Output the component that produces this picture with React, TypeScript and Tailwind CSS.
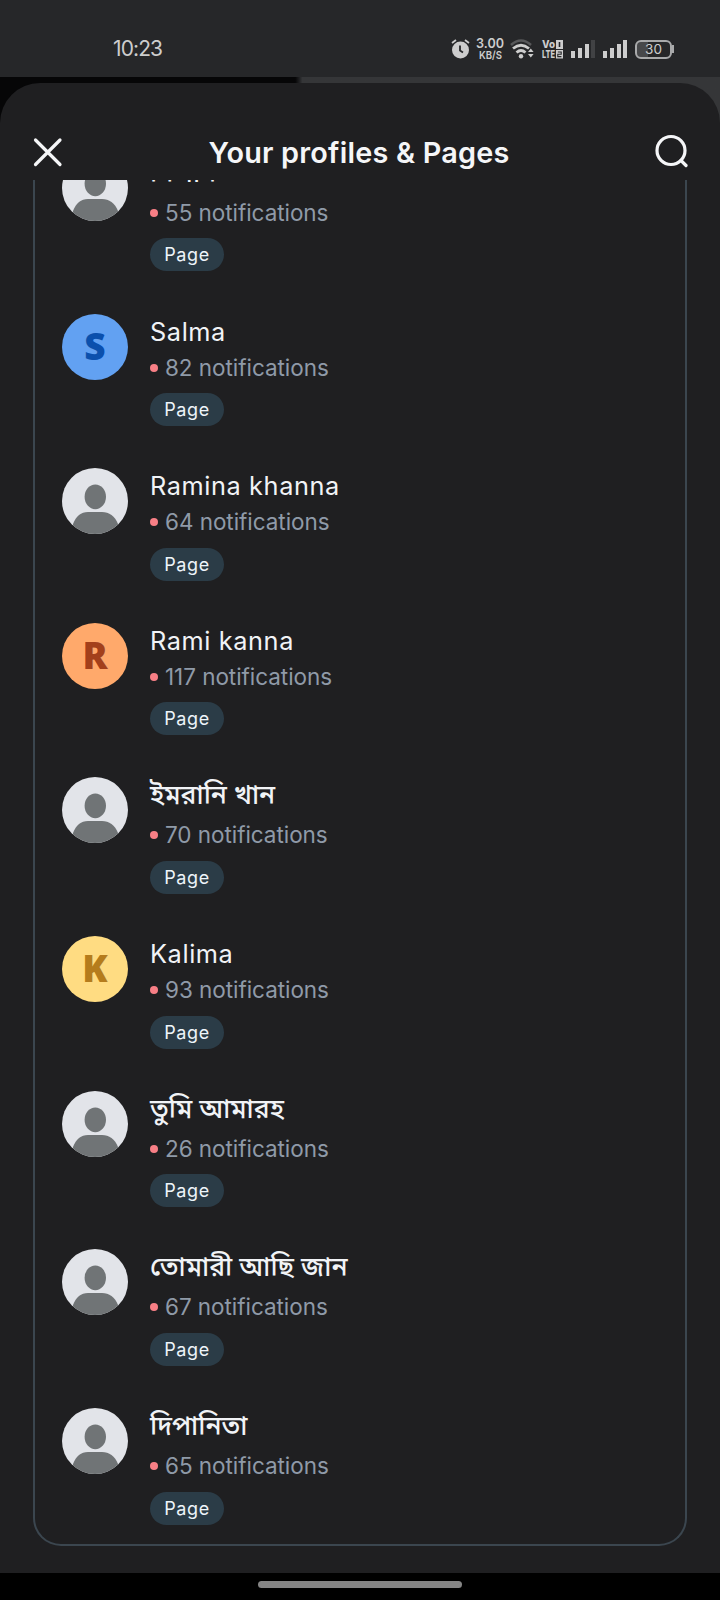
import React from "react";

const font = "font-['Inter','Noto_Sans_Bengali','Noto_Sans',sans-serif]";

type Profile = {
  name: string;
  count: number;
  letter?: string;
  colors?: string;
  bengali?: boolean;
};

const profiles: Profile[] = [
  { name: "নিলান", count: 55, bengali: true },
  { name: "Salma", count: 82, letter: "S", colors: "bg-[#62a1f2] text-[#0b50ad]" },
  { name: "Ramina khanna", count: 64 },
  { name: "Rami kanna", count: 117, letter: "R", colors: "bg-[#ffa96b] text-[#a3401b]" },
  { name: "ইমরানি খান", count: 70, bengali: true },
  { name: "Kalima", count: 93, letter: "K", colors: "bg-[#ffdc82] text-[#b57c1c]" },
  { name: "তুমি আমারহ", count: 26, bengali: true },
  { name: "তোমারী আছি জান", count: 67, bengali: true },
  { name: "দিপানিতা", count: 65, bengali: true },
];

/* Default avatar when the page has no picture */
const PersonAvatar = () => (
  <svg viewBox="0 0 66 66" className="size-[66px] shrink-0 rounded-full bg-[#e2e4e9]">
    <ellipse cx="33.3" cy="28.8" rx="10.7" ry="12.4" fill="#707476" />
    <path d="M9 66 L11 56 C14 48 19 44 26 44 H40 C47 44 53 48 56 56 L58 66 Z" fill="#707476" />
  </svg>
);

const ProfileRow = ({ profile }: { profile: Profile }) => (
  <div
    className={`flex shrink-0 gap-[22px] last:h-[136px] ${
      profile.bengali ? "h-[158.7px]" : "h-[154.6px]"
    }`}
  >
    {profile.letter ? (
      <div
        className={`flex size-[66px] shrink-0 items-center justify-center rounded-full pb-0.5 font-['Noto_Sans',sans-serif] text-[37px] font-black ${profile.colors}`}
      >
        {profile.letter}
      </div>
    ) : (
      <PersonAvatar />
    )}

    <div className="flex flex-col items-start">
      <div
        className={`whitespace-nowrap text-[#f1f3f6] ${
          profile.bengali
            ? "h-[41px] text-[26.5px] leading-[35px] font-medium"
            : "h-[37px] text-[25.3px] leading-[36px] tracking-[0.6px]"
        }`}
      >
        {profile.name}
      </div>
      <div className="flex h-[34px] items-center gap-[7px]">
        <span className="size-2 rounded-full bg-[#f87f86]" />
        <span className="whitespace-nowrap text-[22.5px] leading-[34px] tracking-[-0.05px] text-[#8f9aa8]">
          {profile.count} notifications
        </span>
      </div>
      <span className="mt-[8.5px] flex h-[33px] w-[74px] items-center justify-center rounded-full bg-[#2b3c47] text-[18px] tracking-[0.6px] text-[#eef5fa]">
        Page
      </span>
    </div>
  </div>
);

const StatusBar = () => (
  <div className="flex h-[77px] shrink-0 items-start justify-between bg-[#262729] pt-[34px] pr-[46px] pl-[113px] text-[#cdcdcd]">
    <span className="text-[21px] leading-[30px] tracking-[-0.9px]">10:23</span>

    <div className="flex h-[30px] items-center">
      <svg width="19" height="20" viewBox="0 0 19 20" className="mr-1.5">
        <circle cx="9.5" cy="11" r="8.5" fill="currentColor" />
        <path d="M1 4 L5 1 M18 4 L14 1" stroke="currentColor" strokeWidth="1.8" />
        <path d="M9 6.5 V11.5 L12 13.5" stroke="#262729" strokeWidth="1.8" fill="none" />
      </svg>
      <svg width="28" height="24" viewBox="0 0 28 24" className="mr-1.5 overflow-visible" fill="currentColor">
        <text x="0" y="11" fontSize="13.5" fontWeight="600" textLength="28" lengthAdjust="spacingAndGlyphs">3.00</text>
        <text x="3" y="22" fontSize="11" fontWeight="600" textLength="23" lengthAdjust="spacingAndGlyphs">KB/S</text>
      </svg>
      <svg width="24" height="20" viewBox="0 0 24 20" className="mr-2">
        <path d="M1 6 Q11 -3 21 6" stroke="#57585a" strokeWidth="2.6" fill="none" />
        <path d="M3 9.5 Q11 3 19 9.5 M6.5 13.5 Q11 9.5 15.5 13.5" stroke="currentColor" strokeWidth="2.8" fill="none" />
        <circle cx="11" cy="17.3" r="2.2" fill="currentColor" />
        <path d="M18 13 L20.8 9.5 L23.6 13 Z M18 15 L20.8 18.5 L23.6 15 Z" fill="currentColor" />
      </svg>
      <svg width="21" height="19" viewBox="0 0 21 19" className="mr-2 overflow-visible" fill="currentColor">
        <text x="0" y="8.2" fontSize="10.5" fontWeight="800" textLength="13" lengthAdjust="spacingAndGlyphs">Vo</text>
        <text x="0" y="18.2" fontSize="10.5" fontWeight="800" textLength="13" lengthAdjust="spacingAndGlyphs">LTE</text>
        <path d="M14 0h7v9h-7z M14 10h7v8.5h-7z" />
        <path d="M17.5 2 V7" stroke="#262729" strokeWidth="1.6" />
        <path d="M15.8 12 H19.2 V14.2 H15.8 V16.6 H19.4" stroke="#262729" strokeWidth="1.1" fill="none" />
      </svg>
      <svg width="24" height="18" viewBox="0 0 24 18" className="mr-2" fill="currentColor">
        <path d="M0 11h4v7H0z M7 8h4v10H7z M14 4h4v14h-4z" />
        <path d="M20 0h4v18h-4z" fill="#414244" />
      </svg>
      <svg width="24" height="18" viewBox="0 0 24 18" className="mr-2" fill="currentColor">
        <path d="M0 11h4v7H0z M7 8h4v10H7z M14 4h4v14h-4z M20 0h4v18h-4z" />
      </svg>
      <div className="flex h-[19px] w-[37px] items-center justify-center rounded-md border-2 border-[#a9aaab] bg-linear-to-r from-[#47484a] from-32% to-transparent to-32% text-[13.5px]">
        30
      </div>
      <span className="h-2 w-0.5 bg-[#a9aaab]" />
    </div>
  </div>
);

const App: React.FC = () => {
  return (
    <div className={`flex h-[1600px] w-[720px] flex-col overflow-hidden bg-black ${font}`}>
      <StatusBar />

      <div className="flex h-[1495.5px] shrink-0 flex-col bg-linear-to-r from-[#060607] from-41% to-[#353638] to-42% pt-1.5">
        <div className="flex min-h-0 grow flex-col rounded-t-[40px] bg-[#1f1f21]">
          <header className="flex h-[97px] shrink-0 items-end justify-between px-8 pb-3">
            <svg width="32" height="32" viewBox="0 0 32 32">
              <path d="M3.5 4 L28 28.5 M28 4 L3.5 28.5" stroke="#f5f6f8" strokeWidth="3.2" strokeLinecap="round" />
            </svg>
            <h1 className="-mb-px text-[28.8px] leading-[32px] font-semibold tracking-[0.22px] text-[#f5f6f8]">
              Your profiles &amp; Pages
            </h1>
            <svg width="34" height="34" viewBox="0 0 34 34" fill="none" stroke="#f5f6f8" strokeWidth="3.2">
              <circle cx="17" cy="16.5" r="14" />
              <path d="M27 26.5 L32 31.5" strokeLinecap="round" />
            </svg>
          </header>

          {/* scrolled list */}
          <div className="mx-[33px] flex h-[1366px] flex-col justify-end overflow-hidden rounded-b-[28px] border-x-2 border-b-2 border-[#3b464f] pl-[27px]">
            {profiles.map((profile) => (
              <ProfileRow key={profile.name} profile={profile} />
            ))}
          </div>
        </div>
      </div>

      <div className="flex grow items-start justify-center pt-2">
        <div className="h-[7px] w-[204px] rounded-full bg-[#858585]" />
      </div>
    </div>
  );
};

export default App;
